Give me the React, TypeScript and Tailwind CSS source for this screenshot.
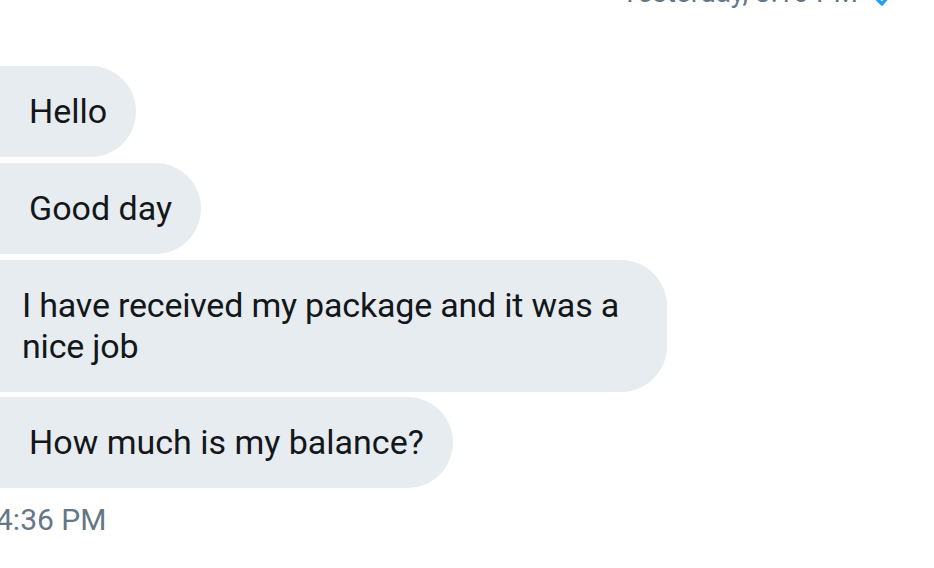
import React from 'react';

const messages = [
  'Hello',
  'Good day',
  'I have received my package and it was a nice job',
  'How much is my balance?',
];

function App() {
  return (
    <div
      className="w-[934px] h-[568px] overflow-hidden bg-white text-[#14171a]"
      style={{ fontFamily: 'Roboto, "Noto Sans", sans-serif' }}
    >
      {/* previous sent message meta, cut by the top edge */}
      <div className="-mt-[22px] flex items-end justify-end pr-[38px] gap-[14px] text-[28px] leading-[30px] text-[#657786]">
        <span>Yesterday, 3:10 PM</span>
        <svg className="mb-[-2px]" width="24" height="24" viewBox="0 0 24 24" fill="none" stroke="#1da1f2" strokeWidth="3.4" strokeLinecap="round" strokeLinejoin="round">
          <polyline points="4 12 10 18 20 6" />
        </svg>
      </div>

      <div className="mt-[58px] flex flex-col items-start gap-[6px]">
        {messages.map((m, i) => (
          <div
            key={i}
            className={`-ml-[16px] bg-[#e6ecf0] rounded-l-[14px] rounded-r-[46px] py-[25px] text-[34px] leading-[41px] ${
              i === 2 ? 'max-w-[683px] pl-[38px] pr-[34px] tracking-[-0.2px]' : 'pl-[45px] pr-[29px]'
            } ${i === 3 ? 'mt-[-1px]' : ''}`}
          >
            {m}
          </div>
        ))}
      </div>

      <div className="mt-[15px] -ml-[4px] text-[30px] leading-[34px] text-[#657786]">4:36 PM</div>
    </div>
  );
}

export default App;
